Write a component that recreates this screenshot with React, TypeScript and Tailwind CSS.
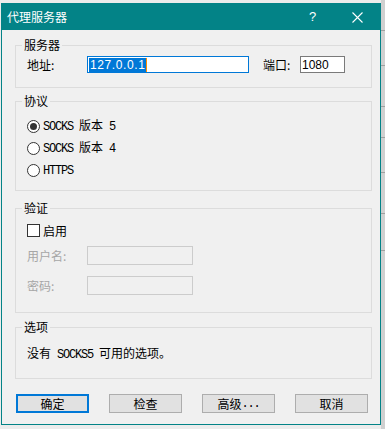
const ui = { fontFamily: '"Noto Sans CJK SC", "Liberation Sans", sans-serif' };

function Mono({ children }: { children: string }) {
  return (
    <span className="font-['Liberation_Mono',monospace] tracking-[-1.2px]">{children}</span>
  );
}

function Group({ title, height, className, children }: { title: string; height: string; className?: string; children: React.ReactNode }) {
  return (
    <div className={`relative ml-[13px] w-[357px] border border-[#dcdcdc] ${height} ${className ?? ""}`}>
      <span className="absolute -top-[9px] left-[6px] bg-[#f0f0f0] px-[2px] text-[12px] leading-[16px] text-black">
        {title}
      </span>
      {children}
    </div>
  );
}

function Radio({ checked, children }: { checked?: boolean; children: React.ReactNode }) {
  return (
    <div className="flex h-[22px] items-center pl-[11px]">
      <span className="flex h-[13px] w-[13px] items-center justify-center rounded-full border border-[#333] bg-white">
        {checked && <span className="h-[7px] w-[7px] rounded-full bg-[#333]" />}
      </span>
      <span className="ml-[3px] text-[12px] leading-[16px] text-black">{children}</span>
    </div>
  );
}

function Button({ children, primary }: { children: React.ReactNode; primary?: boolean }) {
  return (
    <div
      className={`flex h-[19px] w-[73px] items-center justify-center bg-[#e1e1e1] text-[12px] leading-[16px] text-black ${
        primary ? "border-2 border-[#0078d7]" : "border border-[#adadad]"
      }`}
    >
      {children}
    </div>
  );
}

export default function App() {
  return (
    <div className="flex h-[429px] w-[385px] overflow-hidden bg-[#ececec]" style={ui}>
      <div className="ml-[1px] mt-[3px] flex h-[422px] w-[380px] flex-col border border-[#038387] bg-[#f0f0f0]">
        {/* title bar */}
        <div className="flex h-[26px] items-center bg-[#038387] text-white">
          <span className="pl-[5px] text-[12px] leading-[16px]">代理服务器</span>
          <span className="ml-auto flex h-full w-[45px] items-center justify-center text-[13px] font-['Liberation_Sans',sans-serif]">?</span>
          <span className="flex h-full w-[45px] items-center justify-center">
            <svg width="11" height="11" viewBox="0 0 11 11">
              <path d="M0.5 0.5L10.5 10.5M10.5 0.5L0.5 10.5" stroke="white" strokeWidth="1.1" fill="none" />
            </svg>
          </span>
        </div>

        {/* 服务器 */}
        <Group title="服务器" height="h-[43px]" className="mt-[15px]">
          <div className="flex items-center pl-[11px] pt-[10px]">
            <span className="w-[60px] text-[12px] leading-[16px]">地址:</span>
            <div className="flex h-[17px] w-[162px] items-center border border-[#0078d7] bg-white pl-[1px]">
              <span className="bg-[#0078d7] px-[1px] text-[12px] leading-[14px] tracking-[0.6px] text-white font-['Liberation_Sans',sans-serif]">
                127.0.0.1
              </span>
              <span className="h-[14px] w-[1px] bg-[#ff8c00]" />
            </div>
            <span className="ml-[14px] w-[37px] text-[12px] leading-[16px]">端口:</span>
            <div className="flex h-[17px] w-[45px] items-center border border-[#7a7a7a] bg-white pl-[1px] text-[12px] leading-[14px] font-['Liberation_Sans',sans-serif]">
              1080
            </div>
          </div>
        </Group>

        {/* 协议 */}
        <Group title="协议" height="h-[90px]" className="mt-[13px]">
          <div className="pt-[13px]">
            <Radio checked>
              <Mono>SOCKS </Mono>版本<Mono> 5</Mono>
            </Radio>
            <Radio>
              <Mono>SOCKS </Mono>版本<Mono> 4</Mono>
            </Radio>
            <Radio>
              <Mono>HTTPS</Mono>
            </Radio>
          </div>
        </Group>

        {/* 验证 */}
        <Group title="验证" height="h-[105px]" className="mt-[17px]">
          <div className="pl-[11px] pt-[15px]">
            <div className="flex h-[13px] items-center">
              <span className="h-[13px] w-[13px] border border-[#333] bg-white" />
              <span className="ml-[3px] text-[12px] leading-[16px]">启用</span>
            </div>
            <div className="mt-[9px] flex items-center">
              <span className="w-[60px] text-[12px] leading-[16px] text-[#a6a6a6]">用户名:</span>
              <div className="h-[19px] w-[106px] border border-[#cccccc] bg-[#f0f0f0]" />
            </div>
            <div className="mt-[11px] flex items-center">
              <span className="w-[60px] text-[12px] leading-[16px] text-[#a6a6a6]">密码:</span>
              <div className="h-[19px] w-[106px] border border-[#cccccc] bg-[#f0f0f0]" />
            </div>
          </div>
        </Group>

        {/* 选项 */}
        <Group title="选项" height="h-[52px]" className="mt-[14px]">
          <div className="pl-[11px] pt-[17px] text-[12px] leading-[16px]">
            没有<Mono> SOCKS5 </Mono>可用的选项。
          </div>
        </Group>

        <div className="ml-[14px] mt-[15px] flex gap-[20px]">
          <Button primary>确定</Button>
          <Button>检查</Button>
          <Button>
            高级<Mono>...</Mono>
          </Button>
          <Button>取消</Button>
        </div>
      </div>

      {/* window behind, right edge */}
      <div className="flex w-[4px] flex-col bg-[#d0d0d0]">
        <div className="mt-[30px] h-[1px] bg-[#a0a0a0]" />
        <div className="mt-[34px] h-[1px] bg-[#a0a0a0]" />
        <div className="mt-[40px] h-[1px] bg-[#a0a0a0]" />
        <div className="mt-[30px] h-[1px] bg-[#a0a0a0]" />
        <div className="mt-[34px] h-[1px] bg-[#a0a0a0]" />
        <div className="mt-[40px] h-[1px] bg-[#a0a0a0]" />
        <div className="mt-[36px] h-[1px] bg-[#a0a0a0]" />
      </div>
    </div>
  );
}
